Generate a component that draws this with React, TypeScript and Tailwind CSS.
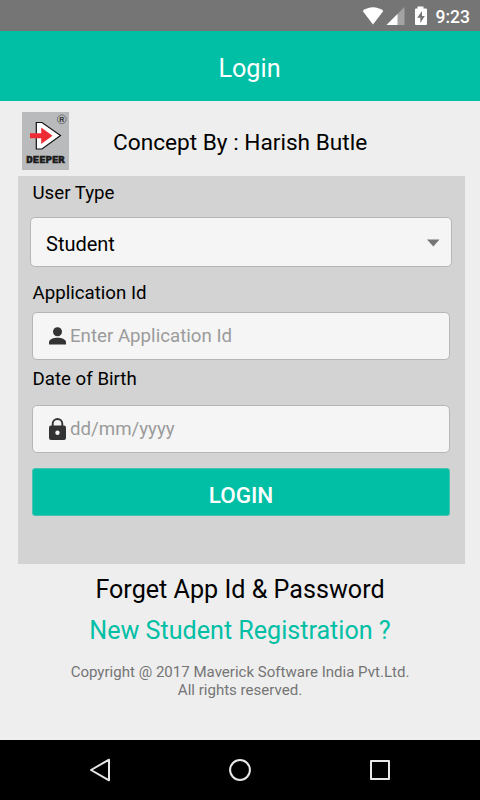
import type { ReactNode } from "react";

function StatusBar() {
  return (
    <div className="flex h-[31px] items-center justify-end bg-[#757575] pr-[10px] text-white">
      <svg width="66" height="24" viewBox="0 0 66 24" className="mr-[8px]">
        <path d="M0.7 7C6.500 2.100 15.500 2.100 21.300 7L11 20.500Z" fill="#fff" />
        <path d="M24.500 21L42.500 3V21Z" fill="#a3a3a3" />
        <path d="M24.500 21L35.500 10V21Z" fill="#fff" />
        <path
          fillRule="evenodd"
          d="M55.500 2.500H61.500V4.500H64Q65 4.500 65 5.500V20Q65 21 64 21H54Q53 21 53 20V5.500Q53 4.500 54 4.500H55.500ZM60 7L55.200 13.700H58.300V19L62.800 12H60Z"
          fill="#fff"
        />
      </svg>
      <span className="relative top-[1px] text-[17.500px] leading-[20px] font-medium">9:23</span>
    </div>
  );
}

function DeeperLogo() {
  return (
    <svg width="47" height="58" viewBox="0 0 47 58">
      <rect width="47" height="58" fill="#b8babc" />
      <circle cx="39.800" cy="7.300" r="4.400" fill="none" stroke="#555" strokeWidth="0.700" />
      <text x="39.900" y="9.900" textAnchor="middle" fontSize="7" fontWeight="700" fill="#333" fontFamily="Liberation Sans, sans-serif">
        R
      </text>
      <path d="M14.300 10.500H20L38.500 23.500L20 37H14.300Z" fill="#fff" stroke="#111" strokeWidth="1.200" />
      <path d="M8 21.200H19.200V15.500L30.500 23.700L19.200 32V26.200H8Z" fill="#ee2c35" />
      <text
        x="4.300"
        y="51.300"
        textLength="38.500"
        lengthAdjust="spacingAndGlyphs"
        fontSize="9"
        fontWeight="700"
        fill="#1a1a1a"
        stroke="#1a1a1a"
        strokeWidth="0.600"
        fontFamily="DejaVu Sans Mono, monospace"
      >
        DEEPER
      </text>
    </svg>
  );
}

function Field({ icon, placeholder }: { icon: ReactNode; placeholder: string }) {
  return (
    <div className="mr-[15px] ml-[14.500px] flex h-[48px] items-center rounded-[5px] border border-[#b6b6b6] bg-[#f5f5f5] pl-[13px]">
      {icon}
      <span className="text-[18.700px] leading-[24px] text-[#9b9b9b]">{placeholder}</span>
    </div>
  );
}

function PersonIcon() {
  return (
    <svg width="24" height="24" viewBox="0 0 24 24" fill="#333">
      <circle cx="11.500" cy="7.700" r="4.500" />
      <path d="M3 20.500V18.200C3 15.200 8 13.800 11.500 13.800S20 15.200 20 18.200V20.500Z" />
    </svg>
  );
}

function LockIcon() {
  return (
    <svg width="24" height="24" viewBox="0 0 24 24">
      <path d="M6.700 10V6.800A4.800 4.800 0 0 1 16.300 6.800V10" fill="none" stroke="#333" strokeWidth="1.900" />
      <rect x="3" y="8.500" width="17" height="14.500" rx="2" fill="#333" />
      <circle cx="11.500" cy="15.800" r="2.200" fill="#f5f5f5" />
    </svg>
  );
}

function NavBar() {
  return (
    <div className="flex h-[60px] items-center justify-between bg-black px-[88px]">
      <svg width="24" height="26" viewBox="0 0 24 26" fill="none" stroke="#e8e8e8" strokeWidth="2" strokeLinejoin="round">
        <path d="M3 13L21 2.700V23.300Z" />
      </svg>
      <svg width="24" height="26" viewBox="0 0 24 26" fill="none" stroke="#e8e8e8" strokeWidth="2">
        <circle cx="12" cy="13" r="9.900" />
      </svg>
      <svg width="24" height="26" viewBox="0 0 24 26" fill="none" stroke="#e8e8e8" strokeWidth="2" strokeLinejoin="round">
        <rect x="3" y="4" width="18" height="18" />
      </svg>
    </div>
  );
}

export default function App() {
  return (
    <div className="flex h-[800px] w-[480px] flex-col overflow-hidden bg-[#eeeeee] font-['Roboto',sans-serif] text-black">
      <StatusBar />
      <header className="flex h-[70px] items-center justify-center bg-[#00bfa5] pt-[5px] pl-[19px] text-[25.200px] leading-[30px] text-white">
        Login
      </header>
      <div className="flex h-[75px] pt-[11px] pl-[22px]">
        <DeeperLogo />
        <h1 className="mt-[16px] ml-[44px] text-[22.650px] leading-[30px]">Concept By : Harish Butle</h1>
      </div>
      <main className="ml-[17.500px] flex h-[387.500px] w-[447.500px] flex-col bg-[#d3d3d3]">
        <label className="mt-[5px] ml-[15px] h-[24px] text-[18.700px] leading-[24px]">User Type</label>
        <div className="mt-[12px] mr-[13px] ml-[12.500px] flex h-[50px] shrink-0 items-center justify-between rounded-[5px] border border-[#b6b6b6] bg-[#f5f5f5] pr-[11px] pl-[15px]">
          <span className="pt-[3px] text-[20px] leading-[24px]">Student</span>
          <svg width="14" height="8" viewBox="0 0 14 8" fill="#757575" className="mt-[1px]">
            <path d="M1 0.500H13.500L7.300 7.500Z" />
          </svg>
        </div>
        <label className="mt-[14px] mb-[7px] ml-[15px] h-[24px] text-[18.700px] leading-[24px]">Application Id</label>
        <Field icon={<PersonIcon />} placeholder="Enter Application Id" />
        <label className="mt-[7px] mb-[14px] ml-[15px] h-[24px] text-[18.700px] leading-[24px]">Date of Birth</label>
        <Field icon={<LockIcon />} placeholder="dd/mm/yyyy" />
        <button className="mr-[15px] ml-[14.500px] mt-[15px] flex h-[48px] items-center justify-center rounded-[3px] border border-[#45c4b0] bg-[#00bfa5] pt-[5px] text-[22.500px] leading-[26px] font-medium text-white">
          LOGIN
        </button>
      </main>
      <div className="flex flex-1 flex-col items-center">
        <a className="mt-[10px] text-[25.150px] leading-[32px]">Forget App Id &amp; Password</a>
        <a className="mt-[9px] text-[25.100px] leading-[32px] text-[#00bfa5]">New Student Registration ?</a>
        <p className="mt-[16px] text-center text-[15.050px] leading-[18px] text-[#757575]">
          Copyright @ 2017 Maverick Software India Pvt.Ltd.
          <br />
          All rights reserved.
        </p>
      </div>
      <NavBar />
    </div>
  );
}
